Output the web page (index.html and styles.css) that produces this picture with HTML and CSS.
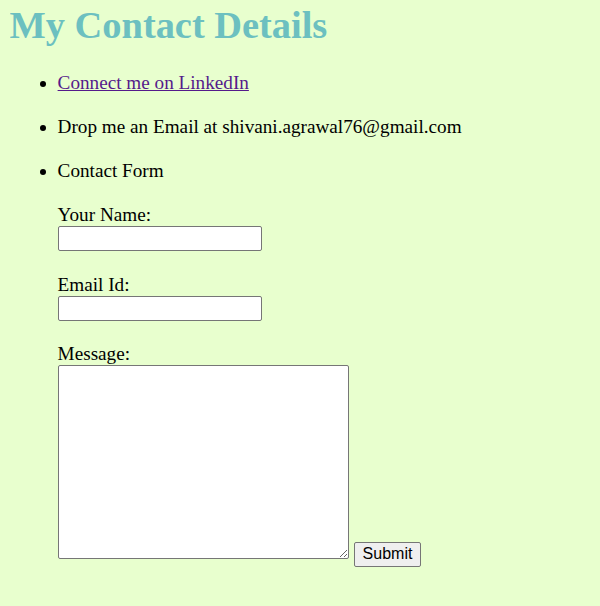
FILE: index.html
```
<!DOCTYPE html>
<html>
<head>
<meta charset="utf-8">
<title>My Contact Details</title>
<link rel="stylesheet" href="styles.css">
</head>
<body>
<h1 class="title">My Contact Details</h1>
<ul class="list">
  <li class="item"><a class="link" href="#">Connect me on LinkedIn</a></li>
  <li class="item">Drop me an Email at shivani.agrawal76@gmail.com</li>
  <li class="item">Contact Form
    <form class="form">
      <label class="label" for="name">Your Name:</label>
      <input class="field" id="name" type="text">
      <label class="label" for="email">Email Id:</label>
      <input class="field" id="email" type="text">
      <label class="label" for="msg">Message:</label>
      <div class="msgrow"><textarea class="area" id="msg"></textarea> <button class="btn" type="submit">Submit</button></div>
    </form>
  </li>
</ul>
</body>
</html>
```
FILE: styles.css
```
html, body {
  background: #e8ffce;
}
body {
  margin: 3px 9.6px 9.6px 9.6px;
  font-family: "Liberation Serif", "Times New Roman", serif;
  font-size: 19.2px;
  color: #000;
}
.title {
  margin: 0;
  font-size: 38.4px;
  font-weight: bold;
  color: #6cc0c0;
}
.list {
  margin: 25px 0 0 0;
  padding-left: 48px;
}
.item {
  margin-bottom: 22.08px;
}
.link {
  color: #551a8b;
}
.form {
  margin: 0;
  padding-top: 22.08px;
}
.label {
  display: block;
}
.field {
  display: block;
  box-sizing: border-box;
  width: 204px;
  height: 25px;
  margin: 0 0 22.6px 0;
  border: 1px solid #767676;
  border-radius: 2px;
  background: #fff;
  font-size: 16px;
}
.msgrow {
  margin: 0;
}
.area {
  box-sizing: border-box;
  width: 291px;
  height: 194px;
  margin: 0;
  border: 1px solid #767676;
  border-radius: 2px;
  background: #fff;
  vertical-align: baseline;
}
.btn {
  font-family: "Liberation Sans", Arial, sans-serif;
  font-size: 16px;
  box-sizing: border-box;
  height: 25px;
  padding: 1px 7.2px;
  margin: 0 0 0 1px;
  border: 1px solid #767676;
  border-radius: 2px;
  background: #efefef;
  color: #000;
}
```
